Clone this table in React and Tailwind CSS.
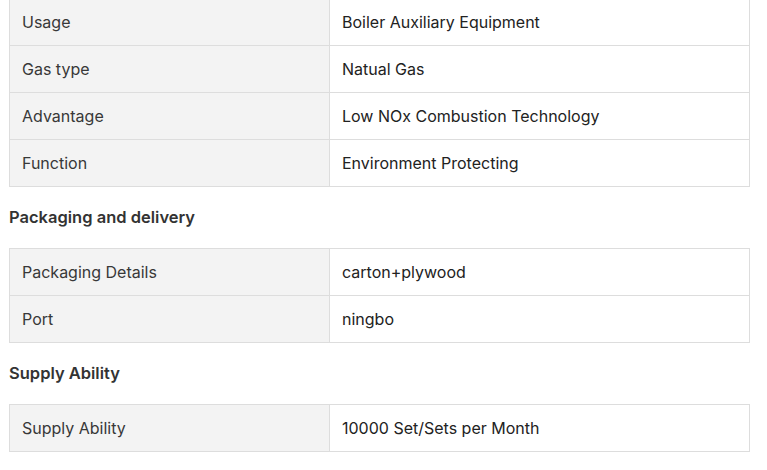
const SECTIONS = [
  {
    title: null,
    rows: [
      ['Usage', 'Boiler Auxiliary Equipment'],
      ['Gas type', 'Natual Gas'],
      ['Advantage', 'Low NOx Combustion Technology'],
      ['Function', 'Environment Protecting'],
    ],
  },
  {
    title: 'Packaging and delivery',
    rows: [
      ['Packaging Details', 'carton+plywood'],
      ['Port', 'ningbo'],
    ],
  },
  {
    title: 'Supply Ability',
    rows: [['Supply Ability', '10000 Set/Sets per Month']],
  },
];

function SpecTable({ rows }) {
  return (
    <div className="w-[741px] border-t border-x border-[#dddddd]">
      {rows.map(([label, value]) => (
        <div key={label} className="flex h-[47px] border-b border-[#dddddd]">
          <div className="w-[320px] shrink-0 bg-[#f3f3f3] border-r border-[#dddddd] flex items-center px-3 text-base text-[#383838]">
            {label}
          </div>
          <div className="flex-1 flex items-center px-3 text-base text-[#222]">{value}</div>
        </div>
      ))}
    </div>
  );
}

export default function App() {
  return (
    <div className="bg-white w-[767px] h-[470px] overflow-hidden font-['Inter','Noto_Sans',sans-serif]">
      <div className="-mt-[2px] pl-[9px]">
        {SECTIONS.map((s, i) => (
          <div key={i}>
            {s.title && (
              <h3 className="mt-[18px] mb-[19px] h-6 leading-6 text-[16.5px] font-semibold text-[#333]">{s.title}</h3>
            )}
            <SpecTable rows={s.rows} />
          </div>
        ))}
      </div>
    </div>
  );
}
